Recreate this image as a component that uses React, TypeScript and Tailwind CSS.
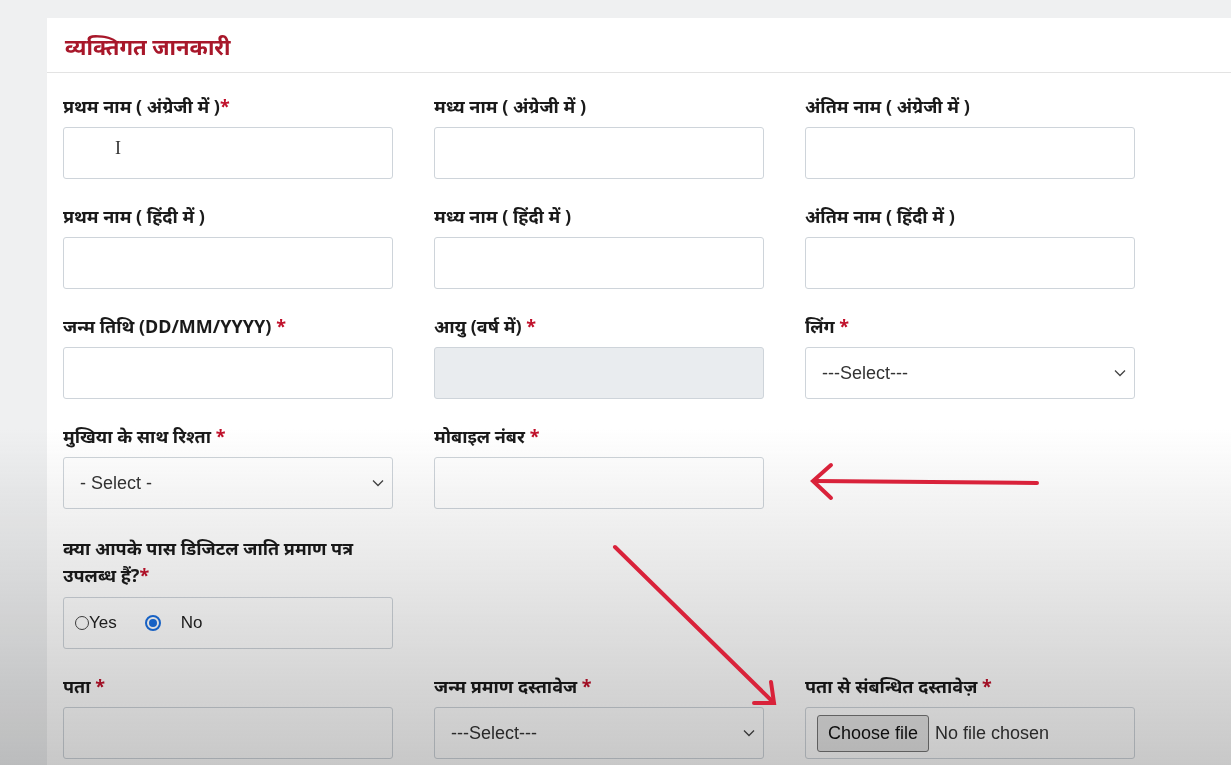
import React from "react";

const F = { fontFamily: '"Noto Sans", "Liberation Sans", "DejaVu Sans", sans-serif' };

function Label({ text, star = true, gap = true }: { text: string; star?: boolean; gap?: boolean }) {
  return (
    <div className="h-[22px] mb-[10px] text-[18px] font-bold text-[#1a1a1a] leading-[22px] whitespace-nowrap">
      {text}
      {star && <span className="text-[#c0102a]">{gap ? " *" : "*"}</span>}
    </div>
  );
}

function Input({ disabled = false }: { disabled?: boolean }) {
  return <div className={`h-[52px] border border-[#ced4da] rounded-[3px] ${disabled ? "bg-[#e9ecef]" : "bg-white"}`} />;
}

function Select({ text }: { text: string }) {
  return (
    <div className="h-[52px] border border-[#ced4da] rounded-[3px] bg-white flex items-center justify-between pl-[16px] pr-[8px] text-[18px] text-[#333]">
      <span style={{ fontFamily: '"Liberation Sans", Arial, sans-serif' }}>{text}</span>
      <svg width="12" height="8" viewBox="0 0 12 8"><path d="M1 1.5l5 5 5-5" fill="none" stroke="#444" strokeWidth="1.3" /></svg>
    </div>
  );
}

export default function App() {
  return (
    <div className="relative w-[1231px] h-[765px] overflow-hidden bg-[#eff0f1]" style={F}>
      <div className="absolute left-[47px] top-[18px] w-[1200px] h-[760px] bg-white">
        <div className="h-[55px] border-b border-[#e3e3e3] pl-[18px] pt-[12px] text-[22px] font-bold text-[#a8172a]">व्यक्तिगत जानकारी</div>
        <div className="pl-[16px] pt-[22px] grid grid-cols-[330px_330px_330px] gap-x-[41px] gap-y-[26px] w-[1100px]">
          <div><Label text="प्रथम नाम ( अंग्रेजी में )" gap={false} /><div className="relative"><Input /><span className="absolute left-[52px] top-[8px] text-[18px] text-[#333]" style={{ fontFamily: '"Liberation Serif", serif' }}>I</span></div></div>
          <div><Label text="मध्य नाम ( अंग्रेजी में )" star={false} /><Input /></div>
          <div><Label text="अंतिम नाम ( अंग्रेजी में )" star={false} /><Input /></div>
          <div><Label text="प्रथम नाम ( हिंदी में )" star={false} /><Input /></div>
          <div><Label text="मध्य नाम ( हिंदी में )" star={false} /><Input /></div>
          <div><Label text="अंतिम नाम ( हिंदी में )" star={false} /><Input /></div>
          <div><Label text="जन्म तिथि (DD/MM/YYYY)" /><Input /></div>
          <div><Label text="आयु (वर्ष में)" /><Input disabled /></div>
          <div><Label text="लिंग" /><Select text="---Select---" /></div>
          <div><Label text="मुखिया के साथ रिश्ता" /><Select text="- Select -" /></div>
          <div><Label text="मोबाइल नंबर" /><Input /></div>
          <div />
          <div>
            <div className="text-[18px] font-bold text-[#1a1a1a] leading-[27px] mb-[8px]">क्या आपके पास डिजिटल जाति प्रमाण पत्र<br />उपलब्ध हैं?<span className="text-[#c0102a]">*</span></div>
            <div className="h-[52px] border border-[#ced4da] rounded-[3px] flex items-center pl-[11px] text-[17px] text-[#222]" style={{ fontFamily: '"Liberation Sans", Arial, sans-serif' }}>
              <span className="w-[14px] h-[14px] rounded-full border border-[#444] bg-white" />
              <span>Yes</span>
              <span className="ml-[28px] w-[16px] h-[16px] rounded-full border-2 border-[#1a6fe0] flex items-center justify-center"><span className="w-[8px] h-[8px] rounded-full bg-[#1a6fe0]" /></span>
              <span className="ml-[20px]">No</span>
            </div>
          </div>
          <div /><div />
          <div><Label text="पता" /><Input /></div>
          <div><Label text="जन्म प्रमाण दस्तावेज" /><Select text="---Select---" /></div>
          <div>
            <Label text="पता से संबन्धित दस्तावेज़" />
            <div className="h-[52px] border border-[#ced4da] rounded-[3px] bg-white flex items-center pl-[11px] text-[18px] text-[#333]" style={{ fontFamily: '"Liberation Sans", Arial, sans-serif' }}>
              <span className="px-[10px] h-[37px] flex items-center border border-[#777] rounded-[3px] bg-[#e6e6e6] text-[#111]">Choose file</span>
              <span className="ml-[6px]">No file chosen</span>
            </div>
          </div>
        </div>
      </div>
      <div className="pointer-events-none absolute inset-0 mix-blend-multiply" style={{ background: "linear-gradient(to bottom, rgba(255,255,255,0) 0%, rgba(255,255,255,0) 56%, rgba(200,200,200,1) 100%)" }} />
      <svg className="absolute left-0 top-0 pointer-events-none" width="1231" height="765">
        <g stroke="#d9223a" strokeWidth="4" strokeLinecap="round" fill="none">
          <path d="M1037 483 L815 481" />
          <path d="M831 465 L813 481 L831 498" />
          <path d="M615 547 L773 702" />
          <path d="M771 682 L774 703 L754 703" />
        </g>
      </svg>
    </div>
  );
}
